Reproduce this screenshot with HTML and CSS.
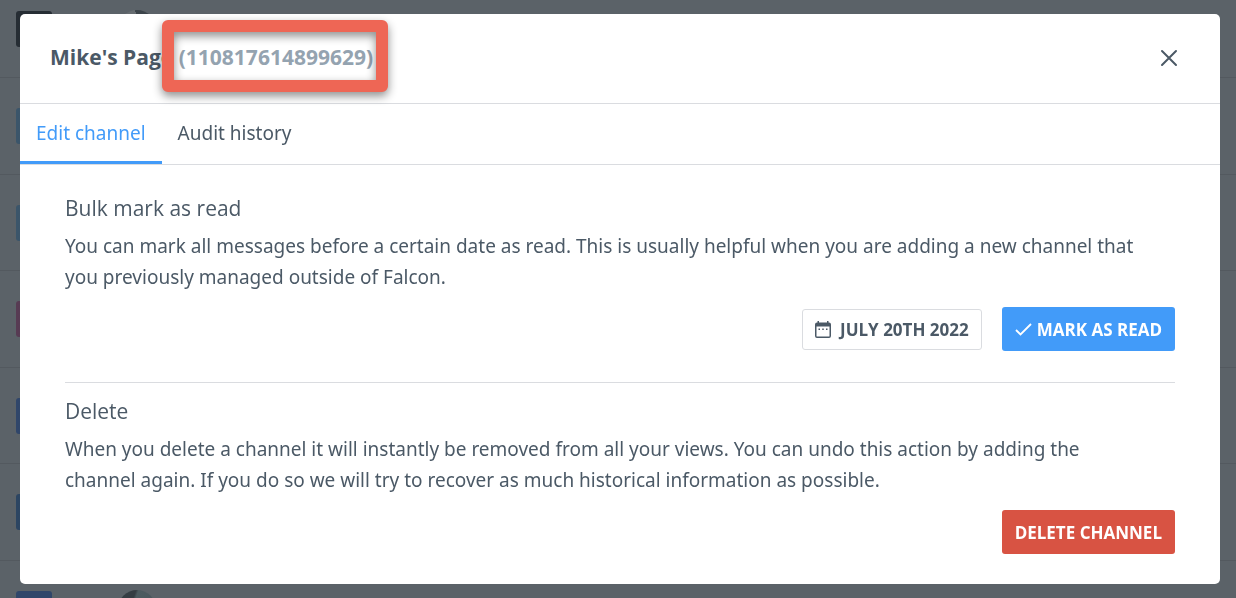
FILE: index.html
```html
<!DOCTYPE html>
<html lang="en">
<head>
    <meta charset="UTF-8">
    <meta name="viewport" content="width=device-width, initial-scale=1.0">
    <title>Edit channel</title>
    <link rel="stylesheet" href="styles.css">
</head>
<body>
    <div class="channel-list" aria-hidden="true">
        <div class="channel-row"><span class="network dark"></span><span class="avatar"></span></div>
        <div class="channel-row"><span class="network twitter"></span></div>
        <div class="channel-row"><span class="network twitter"></span></div>
        <div class="channel-row"><span class="network instagram"></span></div>
        <div class="channel-row"><span class="network facebook"></span></div>
        <div class="channel-row"><span class="network linkedin"></span></div>
        <div class="channel-row"><span class="network facebook"></span><span class="avatar photo"></span></div>
    </div>

    <div class="overlay">
        <div class="modal" role="dialog" aria-labelledby="modal-title">
            <header class="modal-header">
                <h1 id="modal-title">Mike's Page <span class="channel-id">(110817614899629)</span></h1>
                <button class="close" type="button" aria-label="Close">
                    <svg width="18" height="18" viewBox="0 0 18 18" fill="none" stroke="currentColor" stroke-width="2" stroke-linecap="round"><path d="M2 2l14 14M16 2L2 16"/></svg>
                </button>
            </header>
            <nav class="tabs">
                <a class="tab active" href="#edit">Edit channel</a>
                <a class="tab" href="#history">Audit history</a>
            </nav>
            <main class="modal-body" id="edit">
                <section class="section">
                    <h2>Bulk mark as read</h2>
                    <p>You can mark all messages before a certain date as read. This is usually helpful when you are adding a new channel that you previously managed outside of Falcon.</p>
                    <div class="actions">
                        <button class="btn btn-date" type="button">
                            <svg width="16" height="17" viewBox="0 0 16 17"><path fill="currentColor" fill-rule="evenodd" d="M2.500 0h1.500v1.500h8V0h1.500v1.500h.5a2 2 0 0 1 2 2V15a2 2 0 0 1-2 2H2a2 2 0 0 1-2-2V3.500a2 2 0 0 1 2-2h.5zM1.500 5.500V15q0 .5.5.5h12q.5 0 .5-.5V5.500zM3.500 7.500h1.500V9H3.500zM7.250 7.500h1.500V9H7.250zM11 7.500h1.500V9H11z"/></svg>
                            July 20th 2022
                        </button>
                        <button class="btn btn-primary" type="button">
                            <svg width="17" height="14" viewBox="0 0 17 14" fill="none" stroke="currentColor" stroke-width="1.800"><path d="M1 7l4.500 4.500L16 1"/></svg>
                            Mark as read
                        </button>
                    </div>
                </section>
                <section class="section">
                    <h2>Delete</h2>
                    <p>When you delete a channel it will instantly be removed from all your views. You can undo this action by adding the channel again. If you do so we will try to recover as much historical information as possible.</p>
                    <div class="actions">
                        <button class="btn btn-danger" type="button">Delete channel</button>
                    </div>
                </section>
            </main>
        </div>
    </div>
</body>
</html>
```

FILE: styles.css
```css
* {
    box-sizing: border-box;
}
body {
    margin: 0;
    font-family: "Noto Sans", sans-serif;
    font-size: 19px;
    line-height: 31px;
    color: #4b5966;
    background: #5b6268;
}

/* dimmed list behind the dialog */
.channel-list {
    position: fixed;
    inset: 0;
    overflow: hidden;
}
.channel-row {
    display: flex;
    align-items: center;
    gap: 66px;
    height: 97px;
    padding: 0 16px;
    border-bottom: 1px solid #53595f;
}
.channel-row:nth-child(odd) {
    height: 96px;
}
.channel-row:first-child {
    height: 97px;
    margin-top: -19px;
}
.network {
    width: 36px;
    height: 36px;
    border-radius: 3px;
    background: #30466a;
}
.network.dark {
    background: #262d34;
}
.network.twitter {
    background: #3b556a;
}
.network.instagram {
    background: #573b53;
}
.network.linkedin {
    background: #2c4562;
}
.avatar {
    width: 38px;
    height: 38px;
    border-radius: 50%;
    background: linear-gradient(60deg, #666c71 64%, #3c444a 64%);
}
.avatar.photo {
    background: linear-gradient(110deg, #353d43 35%, #4d5b60 40%, #48555b);
}

.overlay {
    position: relative;
    padding: 14px 16px 14px 20px;
}
.modal {
    background: #fff;
    border-radius: 5px;
}
.modal-header {
    display: flex;
    align-items: center;
    justify-content: space-between;
    height: 90px;
    padding: 0 42px 2px 30px;
    border-bottom: 1px solid #dadce0;
}
h1, h2 {
    margin: 0;
    font-family: "Open Sans", sans-serif;
    font-size: 21px;
    line-height: 31px;
}
h1 {
    font-weight: 700;
}
h2 {
    font-weight: 400;
}
.channel-id {
    position: relative;
    color: #94a3b0;
}
.channel-id::after {
    content: "";
    position: absolute;
    inset: -23px -15px -21px -17px;
    border: 12px solid #ee6655;
    border-radius: 6px;
    filter: drop-shadow(0 4px 5px rgba(0, 0, 0, 0.45));
}
.close {
    display: flex;
    padding: 0;
    border: 0;
    background: none;
    color: #4b5966;
    cursor: pointer;
}
.tabs {
    display: flex;
    border-bottom: 1px solid #dadce0;
}
.tab {
    height: 60px;
    padding: 14px 16px 0;
    color: #4b5966;
    text-decoration: none;
}
.tab.active {
    color: #429bf9;
    border-bottom: 3px solid #429bf9;
}
.modal-body {
    padding: 28px 45px 30px;
}
.section + .section {
    margin-top: 31px;
    padding-top: 13px;
    border-top: 1px solid #dadce0;
}
p {
    margin: 7px 0 14px;
    padding-right: 30px;
}
.actions {
    display: flex;
    align-items: center;
    justify-content: flex-end;
    gap: 20px;
}
.btn {
    display: flex;
    align-items: center;
    height: 44px;
    padding: 1px 13px 0;
    border: 0;
    border-radius: 3px;
    font: 700 17px "Open Sans", sans-serif;
    text-transform: uppercase;
    color: #fff;
    cursor: pointer;
}
.btn-date {
    gap: 9px;
    height: 41px;
    padding: 1px 12px 0;
    border: 1px solid #dadce0;
    background: #fff;
    color: #4b5966;
}
.btn-primary {
    gap: 5px;
    background: #429bf9;
}
.btn-danger {
    background: #d85343;
}
```
